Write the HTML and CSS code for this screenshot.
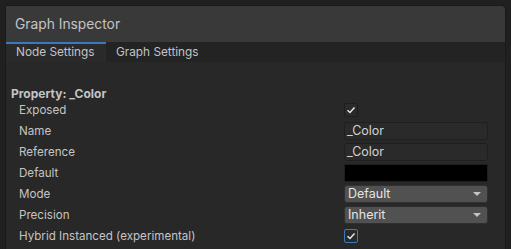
FILE: index.html
```html
<!DOCTYPE html>
<html>
<head>
<meta charset="utf-8">
<link rel="stylesheet" href="styles.css">
</head>
<body>
<div class="panel">
  <div class="header">Graph Inspector</div>
  <div class="tabs">
    <div class="tab active">Node Settings</div>
    <div class="tab">Graph Settings</div>
  </div>
  <div class="content">
    <div class="section-title">Property: _Color</div>
    <div class="row">
      <span class="label">Exposed</span>
      <span class="checkbox"><svg viewBox="0 0 14 14" width="14" height="14"><path d="M3.5 7.2 L6 9.5 L10.5 4.5" fill="none" stroke="#e8e8e8" stroke-width="1.5"/></svg></span>
    </div>
    <div class="row">
      <span class="label">Name</span>
      <span class="field">_Color</span>
    </div>
    <div class="row">
      <span class="label">Reference</span>
      <span class="field">_Color</span>
    </div>
    <div class="row">
      <span class="label">Default</span>
      <span class="swatch"></span>
    </div>
    <div class="row">
      <span class="label">Mode</span>
      <span class="dropdown">Default<span class="arrow"></span></span>
    </div>
    <div class="row">
      <span class="label">Precision</span>
      <span class="dropdown">Inherit<span class="arrow"></span></span>
    </div>
    <div class="row">
      <span class="label">Hybrid Instanced (experimental)</span>
      <span class="checkbox focused"><svg viewBox="0 0 14 14" width="14" height="14"><path d="M3.5 7.2 L6 9.5 L10.5 4.5" fill="none" stroke="#e8e8e8" stroke-width="1.5"/></svg></span>
    </div>
  </div>
</div>
</body>
</html>
```
FILE: styles.css
```css
html, body {
  margin: 0;
  padding: 0;
  background: #202020;
  height: 100%;
  overflow: hidden;
}
body {
  padding: 5px 5px 0 5px;
  box-sizing: border-box;
  font-family: Inter, "Noto Sans", sans-serif;
  color: #c4c4c4;
}
.panel {
  width: 501px;
  height: 244px;
  box-sizing: border-box;
  border: 1px solid #1a1a1a;
  border-bottom: none;
  border-top-right-radius: 5px;
  background: #282828;
  overflow: hidden;
}
.header {
  height: 36px;
  background: #393939;
  font-size: 13.8px;
  line-height: 36px;
  padding-left: 9px;
  color: #c4c4c4;
}
.tabs {
  display: flex;
  height: 20px;
  background: #232323;
}
.tab {
  font-size: 11.8px;
  line-height: 20px;
  padding: 0 10px;
  white-space: nowrap;
  color: #c4c4c4;
}
.tab.active {
  background: #2a2a2a;
  box-shadow: inset 0 2px 0 #3a79bb;
  width: 100px;
  box-sizing: border-box;
}
.content {
  padding-top: 24px;
  padding-left: 5px;
}
.section-title {
  font-weight: 700;
  font-size: 12px;
  line-height: 15px;
  height: 15px;
  color: #c4c4c4;
}
.row {
  display: flex;
  align-items: center;
  height: 18px;
  margin-top: 3px;
  padding-left: 8px;
}
.section-title + .row {
  margin-top: 0;
}
.label {
  width: 325px;
  font-size: 11.6px;
  color: #c4c4c4;
  white-space: nowrap;
}
.checkbox {
  width: 12px;
  height: 12px;
  border: 1px solid #1e1e1e;
  border-radius: 2px;
  background: #2a2a2a;
  display: flex;
  align-items: center;
  justify-content: center;
}
.checkbox svg {
  display: block;
  flex: none;
}
.checkbox.focused {
  border-color: #3a79bb;
}
.field {
  width: 144px;
  height: 18px;
  box-sizing: border-box;
  border: 1px solid #1f1f1f;
  border-radius: 3px;
  background: #2a2a2a;
  font-size: 12.5px;
  line-height: 16px;
  padding-left: 2px;
  color: #d2d2d2;
}
.swatch {
  width: 144px;
  height: 18px;
  background: #000;
  border: 1px solid #1f1f1f;
  box-sizing: border-box;
}
.dropdown {
  position: relative;
  width: 144px;
  height: 18px;
  box-sizing: border-box;
  border: 1px solid #303030;
  border-radius: 3px;
  background: #515151;
  font-size: 12.5px;
  line-height: 16px;
  padding-left: 3px;
  color: #e4e4e4;
}
.arrow {
  position: absolute;
  right: 6px;
  top: 6px;
  width: 0;
  height: 0;
  border-left: 4px solid transparent;
  border-right: 4px solid transparent;
  border-top: 4px solid #c4c4c4;
}
```
